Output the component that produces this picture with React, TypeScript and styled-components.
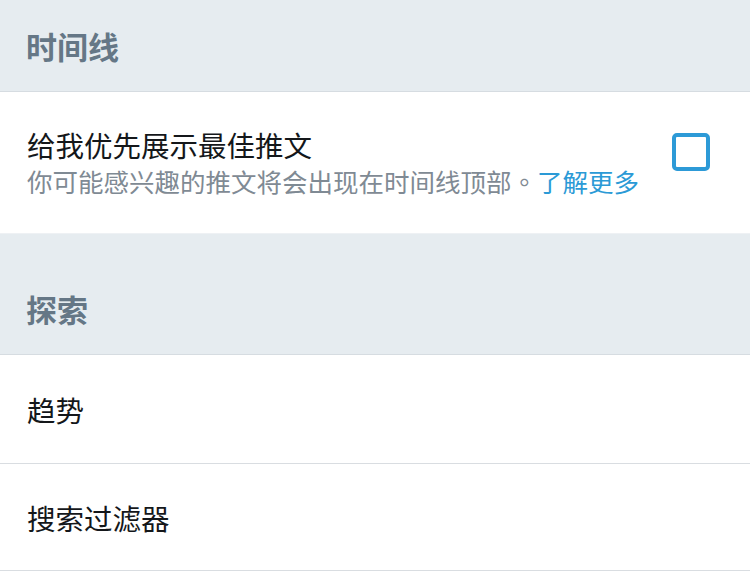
import React from "react";
import styled, { createGlobalStyle } from "styled-components";

const Global = createGlobalStyle`
  html, body { margin: 0; padding: 0; background: #ffffff; }
  body { font-family: "Noto Sans CJK SC", "Noto Sans", sans-serif; }
`;

const Page = styled.div`
  width: 750px;
  display: flex;
  flex-direction: column;
  background: #ffffff;
`;

const SectionHeader = styled.div<{ $h: number }>`
  height: ${(p) => p.$h}px;
  box-sizing: border-box;
  background: #e6ecf0;
  border-bottom: 1px solid #d6dce1;
  display: flex;
  align-items: flex-end;
  padding: 0 0 22px 26px;
  color: #657786;
  font-size: 31px;
  font-weight: 700;
  line-height: 46px;
`;

const SettingRow = styled.div`
  height: 142px;
  box-sizing: border-box;
  display: flex;
  align-items: center;
  justify-content: space-between;
  padding: 0 40px 0 27px;
  border-bottom: 1px solid #eef1f4;
`;

const TextBlock = styled.div`
  display: flex;
  flex-direction: column;
  margin-top: -2px;
`;

const Title = styled.div`
  font-size: 28.5px;
  line-height: 38px;
  color: #14171a;
`;

const Sub = styled.div`
  font-size: 25.5px;
  line-height: 34px;
  color: #7f8a94;
`;

const Period = styled.span`
  font-family: "Noto Sans CJK TC", "Noto Sans CJK SC", sans-serif;
`;

const Link = styled.span`
  color: #2b9ad6;
`;

const Check = styled.div`
  width: 38px;
  height: 38px;
  box-sizing: border-box;
  border: 4.5px solid #2d9ad7;
  border-radius: 5px;
  margin-top: -22px;
`;

const NavRow = styled.div<{ $h: number }>`
  height: ${(p) => p.$h}px;
  box-sizing: border-box;
  display: flex;
  align-items: center;
  padding: 0 27px;
  border-bottom: 1px solid #d9dde1;
  font-size: 28.5px;
  color: #14171a;
`;

export default function App() {
  return (
    <Page>
      <Global />
      <SectionHeader $h={92}>时间线</SectionHeader>
      <SettingRow>
        <TextBlock>
          <Title>给我优先展示最佳推文</Title>
          <Sub>
            你可能感兴趣的推文将会出现在时间线顶部<Period>。</Period>
            <Link>了解更多</Link>
          </Sub>
        </TextBlock>
        <Check />
      </SettingRow>
      <SectionHeader $h={121}>探索</SectionHeader>
      <NavRow $h={109}>趋势</NavRow>
      <NavRow $h={107}>搜索过滤器</NavRow>
    </Page>
  );
}
